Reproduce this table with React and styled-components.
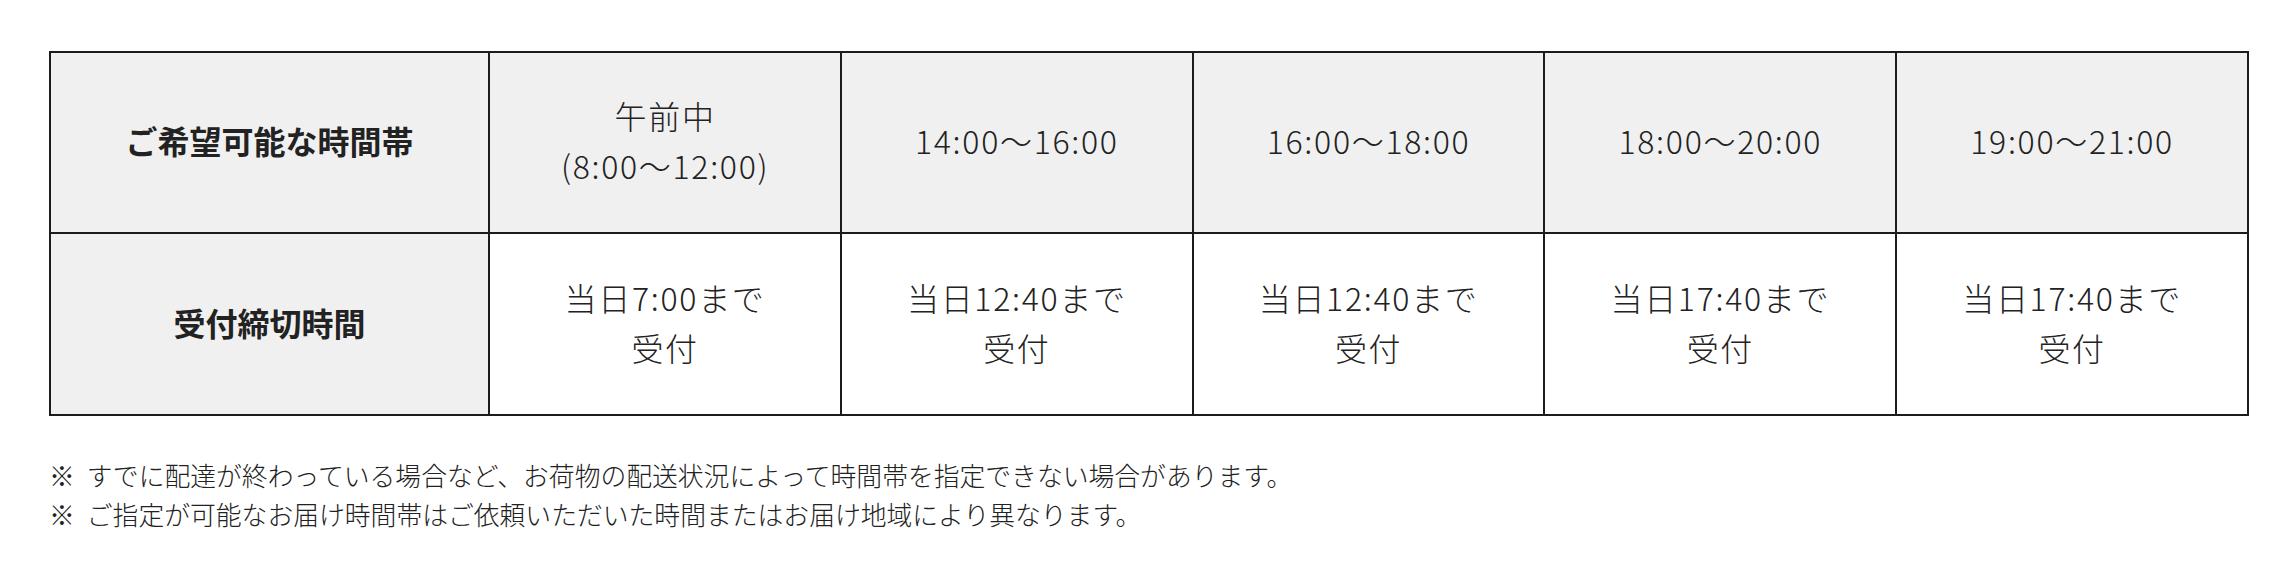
import React from "react";
import styled, { createGlobalStyle } from "styled-components";

const GlobalStyle = createGlobalStyle`
  html, body { margin: 0; padding: 0; background: #ffffff; }
  body {
    font-family: "Noto Sans CJK JP", "Noto Sans", sans-serif;
    color: #222222;
  }
`;

const Page = styled.div`
  padding: 51px 46px 0 49px;
`;

const Table = styled.table`
  width: 100%;
  border-collapse: collapse;
  table-layout: fixed;
  font-size: 32px;
  line-height: 50px;
`;

const Row = styled.tr`
  height: ${(p) => p.$h}px;
`;

const Cell = styled.td`
  border: 2px solid #1c1c1c;
  padding: 0 0 5px;
  text-align: center;
  vertical-align: middle;
  font-weight: 300;
  letter-spacing: 1.7px;
  background: ${(p) => (p.$shaded ? "#f0f0f0" : "#ffffff")};
  width: ${(p) => p.$w || "auto"};
`;

const HeadCell = styled(Cell).attrs({ as: "th" })`
  font-weight: 700;
  letter-spacing: 0;
  background: #f0f0f0;
`;

const Notes = styled.ul`
  list-style: none;
  margin: 39px 0 0;
  padding: 0;
  font-size: 25.8px;
  line-height: 39px;
  font-weight: 300;
`;

const Note = styled.li`
  display: flex;
`;

const Mark = styled.span`
  margin-right: 12px;
`;

const slots = [
  { time: ["午前中", "(8:00〜12:00)"], limit: ["当日7:00まで", "受付"] },
  { time: ["14:00〜16:00"], limit: ["当日12:40まで", "受付"] },
  { time: ["16:00〜18:00"], limit: ["当日12:40まで", "受付"] },
  { time: ["18:00〜20:00"], limit: ["当日17:40まで", "受付"] },
  { time: ["19:00〜21:00"], limit: ["当日17:40まで", "受付"] },
];

const lines = (arr) =>
  arr.map((t, i) => (
    <React.Fragment key={i}>
      {i > 0 && <br />}
      {t}
    </React.Fragment>
  ));

export default function App() {
  return (
    <>
      <GlobalStyle />
      <Page>
        <Table>
          <tbody>
            <Row $h={181}>
              <HeadCell scope="row" $w="20%">ご希望可能な時間帯</HeadCell>
              {slots.map((s, i) => (
                <Cell key={i} $shaded $w="16%">
                  {lines(s.time)}
                </Cell>
              ))}
            </Row>
            <Row $h={182}>
              <HeadCell scope="row">受付締切時間</HeadCell>
              {slots.map((s, i) => (
                <Cell key={i}>{lines(s.limit)}</Cell>
              ))}
            </Row>
          </tbody>
        </Table>
        <Notes>
          <Note>
            <Mark>※</Mark>
            すでに配達が終わっている場合など、お荷物の配送状況によって時間帯を指定できない場合があります。
          </Note>
          <Note>
            <Mark>※</Mark>
            ご指定が可能なお届け時間帯はご依頼いただいた時間またはお届け地域により異なります。
          </Note>
        </Notes>
      </Page>
    </>
  );
}
